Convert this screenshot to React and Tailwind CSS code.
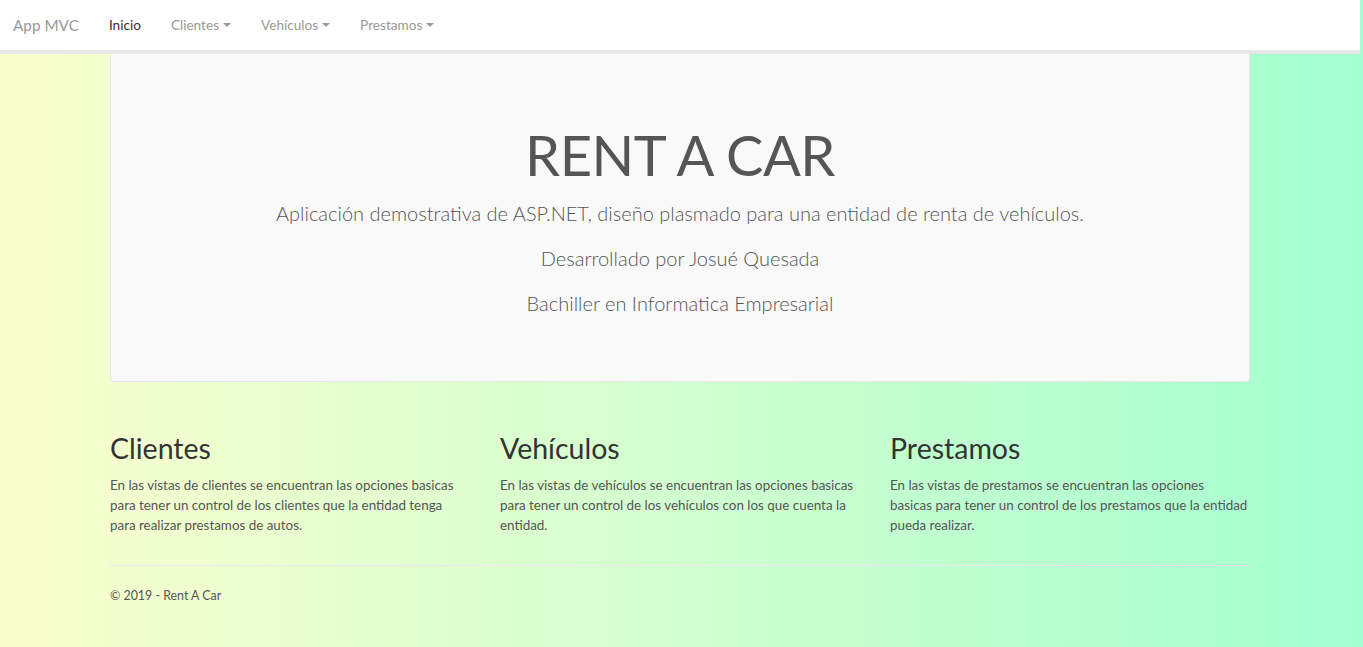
import React from "react";

const font = { fontFamily: "Lato, 'Noto Sans', sans-serif" };

function Caret() {
  return (
    <span className="ml-[4px] inline-block h-0 w-0 border-x-[4px] border-t-[4px] border-x-transparent border-t-[#999] align-middle" />
  );
}

export default function App() {
  const cols = [
    {
      t: "Clientes",
      d: "En las vistas de clientes se encuentran las opciones basicas para tener un control de los clientes que la entidad tenga para realizar prestamos de autos.",
    },
    {
      t: "Vehículos",
      d: "En las vistas de vehículos se encuentran las opciones basicas para tener un control de los vehículos con los que cuenta la entidad.",
    },
    {
      t: "Prestamos",
      d: (
        <>
          En las vistas de prestamos se encuentran las opciones
          <br />
          basicas para tener un control de los prestamos que la entidad
          <br />
          pueda realizar.
        </>
      ),
    },
  ];
  return (
    <div
      className="min-h-[647px] w-full bg-gradient-to-r from-[#fafecf] to-[#a2fed0] text-[13.4px] text-[#555]"
      style={font}
    >
      <nav className="flex h-[54px] w-[1360px] items-stretch border-b-4 border-[#e7e7e7] bg-white text-[13.6px]">
        <div className="flex items-center pl-[13px] pr-[15px] text-[15.3px] text-[#999]">App MVC</div>
        <div className="flex items-center px-[15px] text-[#333]">Inicio</div>
        <div className="flex items-center px-[15px] text-[#999]">
          Clientes
          <Caret />
        </div>
        <div className="flex items-center px-[15px] text-[#999]">
          Vehículos
          <Caret />
        </div>
        <div className="flex items-center px-[15px] text-[#999]">
          Prestamos
          <Caret />
        </div>
      </nav>
      <div className="ml-[110px] w-[1140px]">
        <div className="rounded-b-[4px] border-x border-b border-[#e7e7e7] bg-[#f9f9f9] pb-[48px] pt-[66px] text-center">
          <h1 className="mb-[9px] text-[56px] leading-[69px] tracking-[-0.5px] text-[#555]">RENT A CAR</h1>
          <p className="mb-[15px] text-[20px] font-light leading-[30px]">
            Aplicación demostrativa de ASP.NET, diseño plasmado para una entidad de renta de vehículos.
          </p>
          <p className="mb-[15px] text-[20px] font-light leading-[30px]">Desarrollado por Josué Quesada</p>
          <p className="mb-[15px] text-[20px] font-light leading-[30px]">Bachiller en Informatica Empresarial</p>
        </div>
        <div className="mt-[30px] grid grid-cols-3 gap-[30px]">
          {cols.map((c) => (
            <div key={c.t} className="w-[360px]">
              <h2 className="mb-[10px] mt-[20px] text-[28.5px] leading-[33px] text-[#333]">{c.t}</h2>
              <p className="mb-[10px] w-[380px] max-w-none whitespace-normal leading-[20px]">
                <span className="inline-block w-[360px]">{c.d}</span>
              </p>
            </div>
          ))}
        </div>
        <hr className="mb-[20px] mt-[20px] border-t border-[#eaeaea]" />
        <p className="text-[12.4px] leading-[20px]">© 2019 - Rent A Car</p>
      </div>
    </div>
  );
}
